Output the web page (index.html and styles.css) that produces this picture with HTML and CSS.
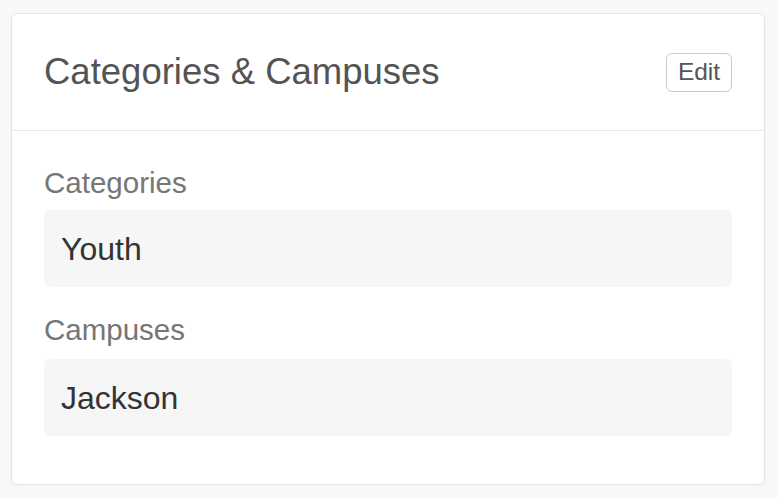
FILE: index.html
```html
<!DOCTYPE html>
<html lang="en">
<head>
<meta charset="utf-8">
<title>Categories &amp; Campuses</title>
<link rel="stylesheet" href="styles.css">
</head>
<body>
  <section class="card">
    <header class="card-header">
      <h2 class="card-title">Categories &amp; Campuses</h2>
      <button class="edit-btn" type="button">Edit</button>
    </header>
    <div class="card-body">
      <div class="field">
        <div class="field-label">Categories</div>
        <div class="field-value">Youth</div>
      </div>
      <div class="field">
        <div class="field-label">Campuses</div>
        <div class="field-value">Jackson</div>
      </div>
    </div>
  </section>
</body>
</html>
```

FILE: styles.css
```css
html, body {
  margin: 0;
  padding: 0;
}

body {
  background: #f7f8f8;
  font-family: "Liberation Sans", Arial, Helvetica, sans-serif;
  padding: 13px 13px 0 11px;
}

.card {
  width: 754px;
  height: 472px;
  box-sizing: border-box;
  background: #ffffff;
  border: 1px solid #e4e4e4;
  border-radius: 6px;
  box-shadow: 0 1px 2px rgba(0, 0, 0, 0.05);
  display: flex;
  flex-direction: column;
}

.card-header {
  height: 117px;
  box-sizing: border-box;
  border-bottom: 1px solid #e6e6e6;
  padding: 0 32px 0 32px;
  display: flex;
  align-items: center;
  justify-content: space-between;
}

.card-title {
  margin: 0 0 1px 0;
  font-size: 36.5px;
  font-weight: normal;
  color: #545454;
  line-height: 42px;
}

.edit-btn {
  width: 66px;
  height: 39px;
  box-sizing: border-box;
  border: 1px solid #cbcbcb;
  border-radius: 6px;
  background: #ffffff;
  color: #555555;
  font-family: "Liberation Sans", Arial, Helvetica, sans-serif;
  font-size: 24.5px;
  line-height: 1;
  padding: 0;
  margin-top: 1px;
  display: flex;
  align-items: center;
  justify-content: center;
}

.card-body {
  padding: 35px 32px 0 32px;
  display: flex;
  flex-direction: column;
  gap: 26px;
}

.field {
  display: flex;
  flex-direction: column;
  gap: 10px;
}

.field + .field .field-label {
  margin-bottom: 2px;
}

.field-label {
  font-size: 29.5px;
  line-height: 34px;
  color: #767676;
}

.field-value {
  height: 77px;
  box-sizing: border-box;
  background: #f6f6f6;
  border-radius: 6px;
  padding: 0 17px;
  display: flex;
  align-items: center;
  font-size: 32px;
  line-height: 40px;
  color: #333333;
}
```
